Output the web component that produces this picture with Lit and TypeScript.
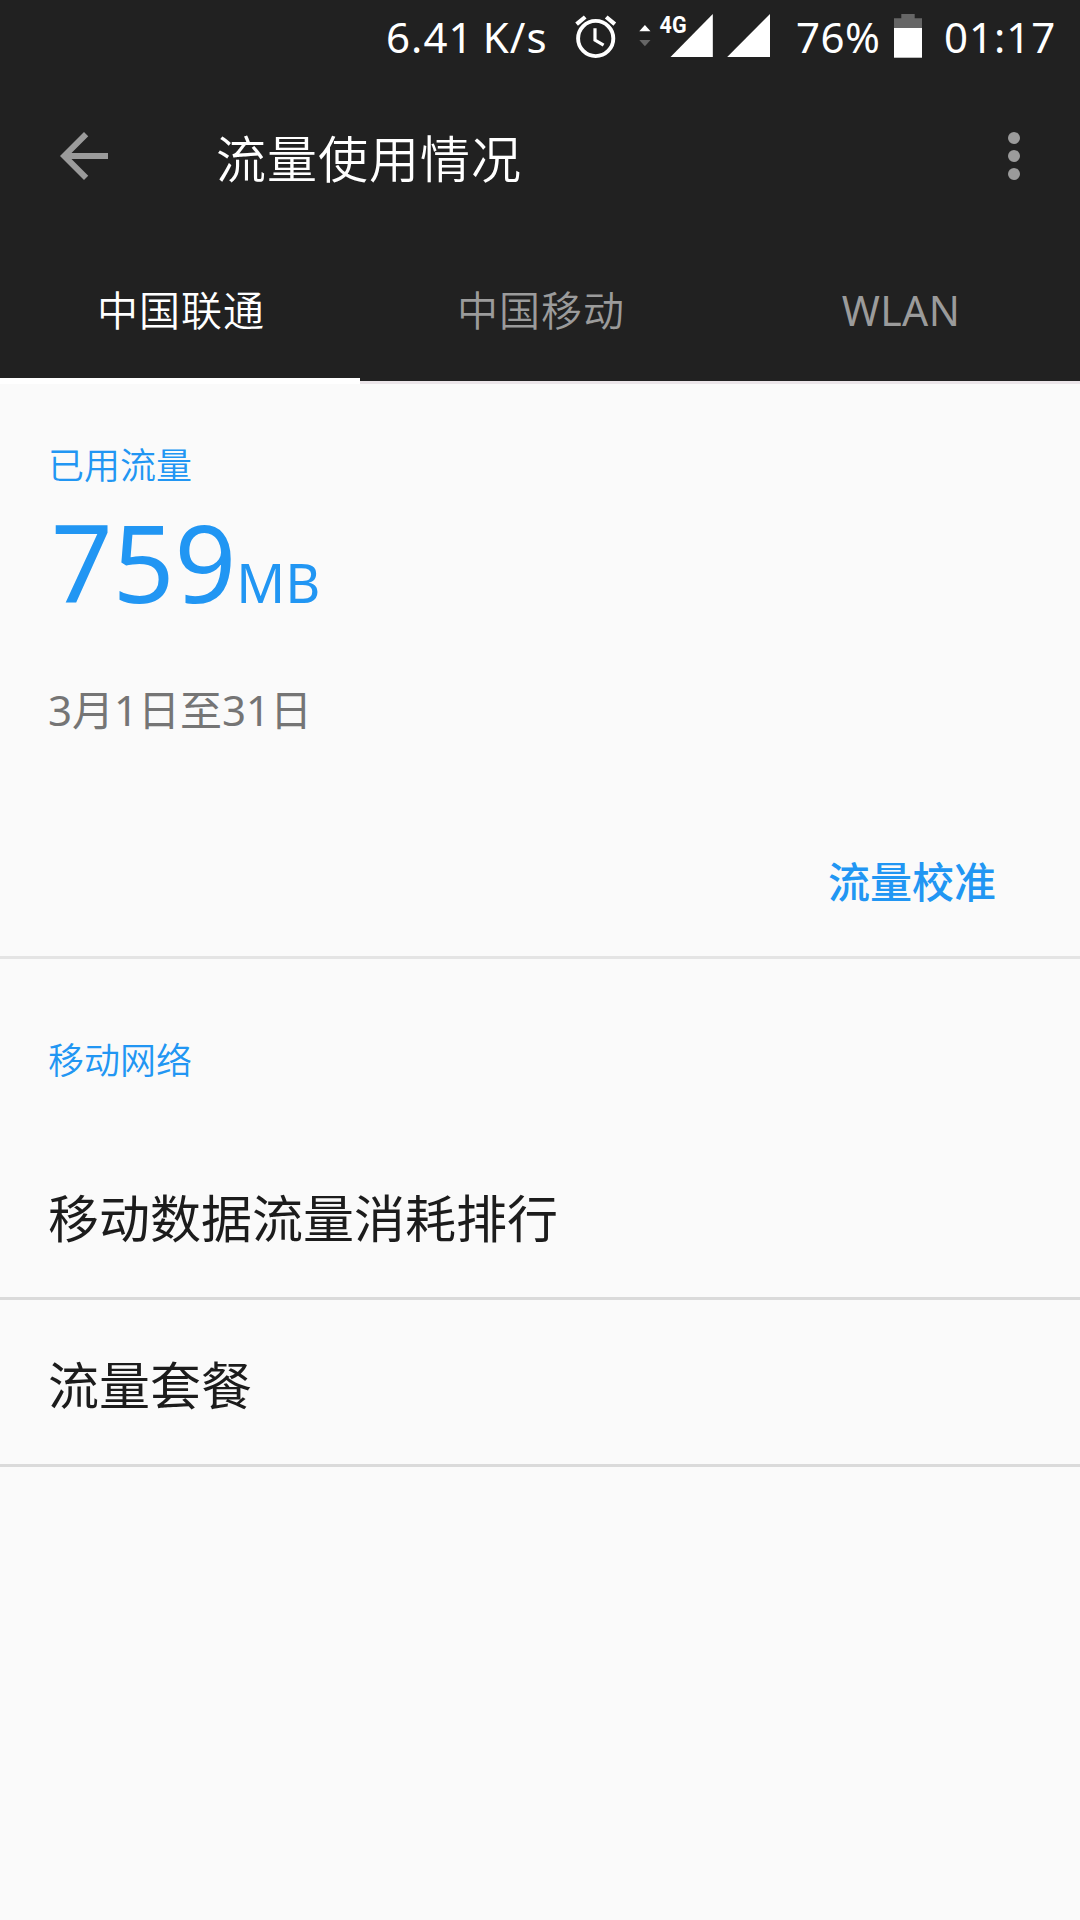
import { LitElement, html, css } from "lit";
import { customElement, state } from "lit/decorators.js";

const fontStack = css`"Noto Sans", "Noto Sans CJK SC", sans-serif`;

@customElement("status-bar")
class StatusBar extends LitElement {
  static styles = css`
    :host {
      display: flex;
      justify-content: flex-end;
      height: 72px;
      padding-right: 24px;
      box-sizing: border-box;
      color: #fff;
      font-family: ${fontStack};
      font-size: 42px;
      line-height: 74px;
      white-space: pre;
    }
    svg {
      display: block;
      height: 72px;
      flex: none;
    }
    .speed { width: 162px; letter-spacing: 1.1px; word-spacing: -3px; }
    .alarm { width: 44px; margin-left: 26px; }
    .signal { width: 134px; margin-left: 19px; }
    .level { width: 87px; margin-left: 25px; letter-spacing: 0.5px; }
    .battery { width: 28px; margin-left: 11px; }
    .clock { width: 112px; margin-left: 22px; letter-spacing: 1px; }
    .net { font: 700 23px Roboto, sans-serif; }
  `;

  render() {
    return html`
      <span class="speed">6.41 K/s</span>
      <svg class="alarm" viewBox="574 0 44 72" fill="none" stroke="#fff">
        <circle cx="595.7" cy="38.5" r="17.6" stroke-width="3.9" />
        <path d="M595 28.3V40l8.6 5.2" stroke-width="3.2" />
        <path d="M576.6 24.2l8.6-7.2M614.8 24.2l-8.6-7.2" stroke-width="4.2" />
      </svg>
      <svg class="signal" viewBox="637 0 134 72" fill="#fff">
        <path d="M639.3 31.3h11.2l-5.6-6.3z" />
        <path d="M639.3 40h11.2l-5.6 6.3z" fill="#666" />
        <path d="M712.8 14v43h-42.3z" />
        <path d="M770 14v43h-42.8z" />
        <text class="net" x="659.6" y="33.2" textLength="27" lengthAdjust="spacingAndGlyphs">4G</text>
      </svg>
      <span class="level">76%</span>
      <svg class="battery" viewBox="894 0 28 72">
        <path d="M901.3 14h13.4v4.2H922V28h-28v-9.8h7.3z" fill="#666" />
        <path d="M894 28h28v29.7h-28z" fill="#fff" />
      </svg>
      <span class="clock">01:17</span>
    `;
  }
}

@customElement("app-bar")
class AppBar extends LitElement {
  static styles = css`
    :host {
      display: flex;
      align-items: center;
      height: 168px;
      padding: 0 30px 0 48px;
      box-sizing: border-box;
      font-family: ${fontStack};
    }
    svg { display: block; width: 72px; height: 72px; fill: #9b9b9b; }
    .title {
      flex: 1;
      margin: 0 0 0 96px;
      padding-top: 5px;
      color: #fff;
      font-size: 50px;
      font-weight: 350;
      letter-spacing: 1px;
      line-height: 72px;
    }
  `;

  render() {
    return html`
      <svg viewBox="0 0 24 24">
        <path d="M20 11H7.83l5.59-5.59L12 4l-8 8 8 8 1.41-1.41L7.83 13H20z" />
      </svg>
      <h1 class="title">流量使用情况</h1>
      <svg viewBox="0 0 24 24">
        <circle cx="12" cy="6" r="2" />
        <circle cx="12" cy="12" r="2" />
        <circle cx="12" cy="18" r="2" />
      </svg>
    `;
  }
}

@customElement("app-root")
class AppRoot extends LitElement {
  @state() private active = 0;

  private tabs = ["中国联通", "中国移动", "WLAN"];
  private rows = ["移动数据流量消耗排行", "流量套餐"];

  static styles = css`
    :host {
      display: flex;
      flex-direction: column;
      height: 1920px;
      background: #fafafa;
      font-family: ${fontStack};
    }
    .header { background: #212121; }
    .tabs {
      display: grid;
      grid-template-columns: repeat(3, 1fr);
      grid-template-rows: 144px;
    }
    .tab {
      box-sizing: border-box;
      height: 144px;
      padding-left: 2px;
      border-bottom: 3px solid #ebe5e9;
      color: #9b9b9b;
      font-size: 41px;
      font-weight: 350;
      letter-spacing: 1px;
      line-height: 141px;
      text-align: center;
    }
    .tab.latin { font-weight: 400; letter-spacing: 0.4px; }
    .tab.active { border-bottom: 6px solid #fff; color: #fff; }
    .usage {
      display: flex;
      flex-direction: column;
      height: 575px;
      padding: 57px 48px 0;
      box-sizing: border-box;
      border-bottom: 3px solid #e4e4e4;
    }
    .label { color: #2196f3; font-size: 36px; font-weight: 350; line-height: 50px; }
    .amount {
      display: flex;
      align-items: baseline;
      height: 130px;
      margin-top: 6px;
      padding-left: 3px;
      color: #2196f3;
      font-size: 108px;
      line-height: 130px;
    }
    .unit { font-size: 54px; }
    .period { margin-top: 53px; color: #757575; font-size: 42px; line-height: 60px; }
    .calibrate {
      align-self: flex-end;
      margin: 112px 36px 0 0;
      color: #2196f3;
      font-size: 42px;
      font-weight: 500;
      line-height: 60px;
    }
    .section { padding: 77px 48px 47px; }
    .row {
      height: 167px;
      padding: 3px 48px 0;
      box-sizing: border-box;
      border-bottom: 3px solid #dadada;
      color: #1c1c1c;
      font-size: 51px;
      line-height: 164px;
    }
  `;

  render() {
    return html`
      <header class="header">
        <status-bar></status-bar>
        <app-bar></app-bar>
        <nav class="tabs">
          ${this.tabs.map(
            (name, i) => html`<div
              class="tab ${i === this.active ? "active" : ""} ${/^\w+$/.test(name) ? "latin" : ""}"
              @click=${() => (this.active = i)}
            >${name}</div>`
          )}
        </nav>
      </header>
      <section class="usage">
        <div class="label">已用流量</div>
        <div class="amount"><span>759</span><span class="unit">MB</span></div>
        <div class="period">3月1日至31日</div>
        <div class="calibrate">流量校准</div>
      </section>
      <div class="label section">移动网络</div>
      ${this.rows.map((name) => html`<div class="row">${name}</div>`)}
    `;
  }
}
